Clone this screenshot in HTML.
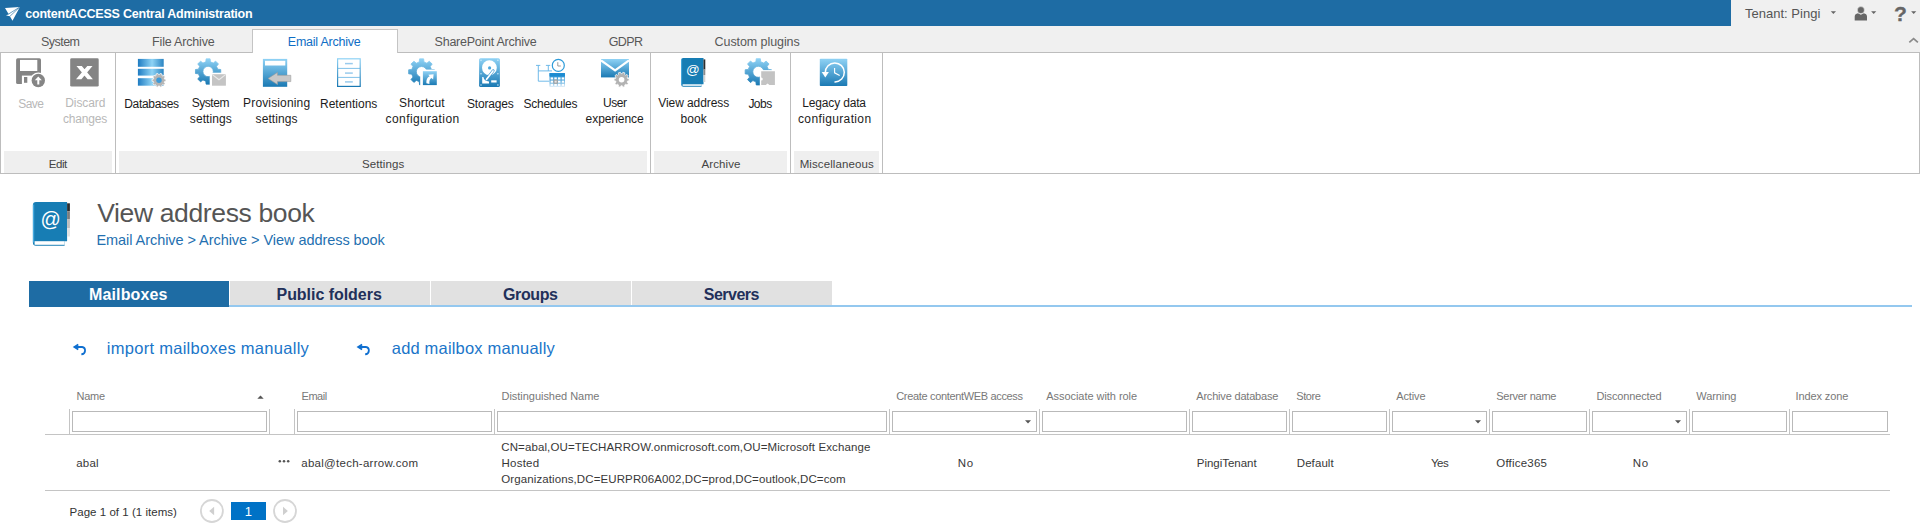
<!DOCTYPE html>
<html lang="en">
<head>
<meta charset="utf-8">
<title>contentACCESS Central Administration</title>
<style>
*{box-sizing:border-box;margin:0;padding:0}
html,body{width:1920px;height:527px;overflow:hidden;background:#fff}
body{font-family:"Liberation Sans",sans-serif;color:#222}
h1{font-weight:normal;font-size:inherit}
.tx{position:absolute;white-space:pre;line-height:1;font-family:"Liberation Sans",sans-serif}
#topbar{position:absolute;left:0;top:0;width:1731px;height:26px;background:#1e6ca4}
#topright{position:absolute;left:1731px;top:0;width:189px;height:26px;background:#f0f0f0}
.help{left:1893.9px;top:2px;font-size:21px;line-height:24px;font-weight:bold;color:#666;-webkit-text-stroke:0.3px #666}
#tabrow{position:absolute;left:0;top:26px;width:1920px;height:27px;background:#f0f0f0;border-bottom:1px solid #bdbdbd}
#rtab-active{position:absolute;left:252px;top:29px;width:146px;height:24px;background:#fff;border:1px solid #c4c4c4;border-bottom:none}
#ribbon{position:absolute;left:0;top:53px;width:1920px;height:121px;background:#fff;border-bottom:1px solid #bdbdbd;border-left:1px solid #bdbdbd;border-right:1px solid #bdbdbd}
.gsep{position:absolute;top:53px;width:1px;height:120px;background:#bdbdbd}
.glabel{position:absolute;top:151px;height:22px;background:#efefef}
#icons{position:absolute;left:0;top:0;width:1920px;height:527px;pointer-events:none}
.stab{position:absolute;top:281px;height:26px;background:#e1e1e1;border-bottom:2px solid #94c8ef}
.stab.on{background:#1e6ca4;border-bottom:none}
#stabline{position:absolute;left:29px;top:305px;width:1883px;height:2px;background:#94c8ef}
.gf{position:absolute;top:411px;height:21px;border:1px solid #b9b9b9;background:#fff}
.gfsep{position:absolute;top:409px;width:1px;height:25px;background:#c4c4c4}
.hline{position:absolute;height:1px;background:#c4c4c4;left:45px;width:1845px}
#pgnum{position:absolute;left:231px;top:502px;width:35px;height:18px;background:#0072c6}
</style>
</head>
<body>
<div id="topbar"></div><div id="topright"></div>
<div class="g" id="apptitle"><span class="tx" style="left:25.25px;top:8px;font-size:12.5px;letter-spacing:-0.216px;color:#fff;font-weight:bold">contentACCESS Central Administration</span></div>
<div class="g" id="tenant"><span class="tx" style="left:1745.00px;top:7px;font-size:13px;letter-spacing:0.010px;color:#555">Tenant: Pingi</span><span class="tx help">?</span></div>
<div id="tabrow"></div><div id="rtab-active"></div>
<div class="g" id="tabs"><span class="tx" style="left:41.00px;top:36px;font-size:12.5px;letter-spacing:-0.532px;color:#585858">System</span><span class="tx" style="left:152.10px;top:36px;font-size:12.5px;letter-spacing:-0.186px;color:#585858">File Archive</span><span class="tx" style="left:287.80px;top:36px;font-size:12.5px;letter-spacing:-0.238px;color:#0f6ec5">Email Archive</span><span class="tx" style="left:434.60px;top:36px;font-size:12.5px;letter-spacing:-0.250px;color:#585858">SharePoint Archive</span><span class="tx" style="left:608.63px;top:36px;font-size:12.5px;letter-spacing:-0.550px;color:#585858">GDPR</span><span class="tx" style="left:714.60px;top:36px;font-size:12.5px;letter-spacing:-0.077px;color:#585858">Custom plugins</span></div>
<div id="ribbon"></div>
<div class="gsep" style="left:115px"></div>
<div class="gsep" style="left:650px"></div>
<div class="gsep" style="left:790px"></div>
<div class="gsep" style="left:882px"></div>
<div class="glabel" style="left:4px;width:108px"></div>
<div class="glabel" style="left:119px;width:528px"></div>
<div class="glabel" style="left:654px;width:133px"></div>
<div class="glabel" style="left:794px;width:85px"></div>
<div class="g" id="glabels"><span class="tx" style="left:48.75px;top:159px;font-size:11.5px;letter-spacing:-0.424px;color:#444">Edit</span><span class="tx" style="left:362.00px;top:159px;font-size:11.5px;letter-spacing:0.085px;color:#444">Settings</span><span class="tx" style="left:701.50px;top:159px;font-size:11.5px;letter-spacing:0.092px;color:#444">Archive</span><span class="tx" style="left:799.70px;top:159px;font-size:11.5px;letter-spacing:0.098px;color:#444">Miscellaneous</span></div>
<div class="g rbtn"><span class="tx" style="left:18.24px;top:98px;font-size:12px;letter-spacing:-0.550px;color:#b8b8b8">Save</span></div>
<div class="g rbtn"><span class="tx" style="left:65.30px;top:97px;font-size:12px;letter-spacing:-0.100px;color:#b8b8b8">Discard</span> <span class="tx" style="left:63.00px;top:113px;font-size:12px;letter-spacing:-0.178px;color:#b8b8b8">changes</span></div>
<div class="g rbtn"><span class="tx" style="left:124.20px;top:98px;font-size:12px;letter-spacing:-0.309px;color:#1c1c1c">Databases</span></div>
<div class="g rbtn"><span class="tx" style="left:191.80px;top:97px;font-size:12px;letter-spacing:-0.482px;color:#1c1c1c">System</span> <span class="tx" style="left:189.80px;top:113px;font-size:12px;letter-spacing:0.092px;color:#1c1c1c">settings</span></div>
<div class="g rbtn"><span class="tx" style="left:243.10px;top:97px;font-size:12px;letter-spacing:0.146px;color:#1c1c1c">Provisioning</span> <span class="tx" style="left:255.60px;top:113px;font-size:12px;letter-spacing:0.078px;color:#1c1c1c">settings</span></div>
<div class="g rbtn"><span class="tx" style="left:320.00px;top:98px;font-size:12px;letter-spacing:-0.008px;color:#1c1c1c">Retentions</span></div>
<div class="g rbtn"><span class="tx" style="left:399.00px;top:97px;font-size:12px;letter-spacing:0.135px;color:#1c1c1c">Shortcut</span> <span class="tx" style="left:385.60px;top:113px;font-size:12px;letter-spacing:0.405px;color:#1c1c1c">configuration</span></div>
<div class="g rbtn"><span class="tx" style="left:466.90px;top:98px;font-size:12px;letter-spacing:-0.168px;color:#1c1c1c">Storages</span></div>
<div class="g rbtn"><span class="tx" style="left:523.50px;top:98px;font-size:12px;letter-spacing:-0.255px;color:#1c1c1c">Schedules</span></div>
<div class="g rbtn"><span class="tx" style="left:603.10px;top:97px;font-size:12px;letter-spacing:-0.513px;color:#1c1c1c">User</span> <span class="tx" style="left:585.60px;top:113px;font-size:12px;letter-spacing:-0.070px;color:#1c1c1c">experience</span></div>
<div class="g rbtn"><span class="tx" style="left:658.30px;top:97px;font-size:12px;letter-spacing:-0.083px;color:#1c1c1c">View address</span> <span class="tx" style="left:680.40px;top:113px;font-size:12px;letter-spacing:0.093px;color:#1c1c1c">book</span></div>
<div class="g rbtn"><span class="tx" style="left:748.40px;top:98px;font-size:12px;letter-spacing:-0.516px;color:#1c1c1c">Jobs</span></div>
<div class="g rbtn"><span class="tx" style="left:802.30px;top:97px;font-size:12px;letter-spacing:-0.171px;color:#1c1c1c">Legacy data</span> <span class="tx" style="left:798.00px;top:113px;font-size:12px;letter-spacing:0.363px;color:#1c1c1c">configuration</span></div>
<h1 class="g"><span class="tx" style="left:97.20px;top:200px;font-size:26.5px;letter-spacing:-0.361px;color:#555">View address book</span></h1>
<div class="g" id="crumb"><span class="tx" style="left:96.40px;top:233px;font-size:14.5px;letter-spacing:-0.053px;color:#2470b0">Email Archive &gt; Archive &gt; View address book</span></div>
<div id="stabline"></div>
<div class="stab on" style="left:29px;width:199.75px"></div>
<div class="g"><span class="tx" style="left:89.00px;top:287px;font-size:16px;letter-spacing:0.130px;color:#fff;font-weight:bold">Mailboxes</span></div>
<div class="stab" style="left:230.25px;width:199.5px"></div>
<div class="g"><span class="tx" style="left:276.50px;top:287px;font-size:16px;letter-spacing:-0.038px;color:#22305a;font-weight:bold">Public folders</span></div>
<div class="stab" style="left:431.25px;width:199.5px"></div>
<div class="g"><span class="tx" style="left:503.00px;top:287px;font-size:16px;letter-spacing:-0.398px;color:#22305a;font-weight:bold">Groups</span></div>
<div class="stab" style="left:632.25px;width:199.5px"></div>
<div class="g"><span class="tx" style="left:703.75px;top:287px;font-size:16px;letter-spacing:-0.512px;color:#22305a;font-weight:bold">Servers</span></div>
<div class="g alink"><span class="tx" style="left:106.80px;top:340px;font-size:16.5px;letter-spacing:0.280px;color:#1a75c9">import mailboxes manually</span></div>
<div class="g alink"><span class="tx" style="left:391.80px;top:340px;font-size:16.5px;letter-spacing:0.177px;color:#1a75c9">add mailbox manually</span></div>
<div class="gfsep" style="left:69px"></div>
<div class="gfsep" style="left:269px"></div>
<div class="gfsep" style="left:294px"></div>
<div class="gfsep" style="left:494px"></div>
<div class="gfsep" style="left:889px"></div>
<div class="gfsep" style="left:1039px"></div>
<div class="gfsep" style="left:1189px"></div>
<div class="gfsep" style="left:1289px"></div>
<div class="gfsep" style="left:1389px"></div>
<div class="gfsep" style="left:1489px"></div>
<div class="gfsep" style="left:1589px"></div>
<div class="gfsep" style="left:1689px"></div>
<div class="gfsep" style="left:1789px"></div>
<div class="gf" style="left:72px;width:195px"></div>
<div class="gf" style="left:297px;width:195px"></div>
<div class="gf" style="left:497px;width:390px"></div>
<div class="gf" style="left:892px;width:145px"></div>
<div class="gf" style="left:1042px;width:145px"></div>
<div class="gf" style="left:1192px;width:95px"></div>
<div class="gf" style="left:1292px;width:95px"></div>
<div class="gf" style="left:1392px;width:95px"></div>
<div class="gf" style="left:1492px;width:95px"></div>
<div class="gf" style="left:1592px;width:95px"></div>
<div class="gf" style="left:1692px;width:95px"></div>
<div class="gf" style="left:1792px;width:96px"></div>
<div class="g" id="ghead"><span class="tx" style="left:76.60px;top:391px;font-size:11px;letter-spacing:-0.275px;color:#787878">Name</span><span class="tx" style="left:301.50px;top:391px;font-size:11px;letter-spacing:-0.453px;color:#787878">Email</span><span class="tx" style="left:501.50px;top:391px;font-size:11px;letter-spacing:-0.033px;color:#787878">Distinguished Name</span><span class="tx" style="left:896.25px;top:391px;font-size:11px;letter-spacing:-0.337px;color:#787878">Create contentWEB access</span><span class="tx" style="left:1046.25px;top:391px;font-size:11px;letter-spacing:-0.047px;color:#787878">Associate with role</span><span class="tx" style="left:1196.25px;top:391px;font-size:11px;letter-spacing:-0.192px;color:#787878">Archive database</span><span class="tx" style="left:1296.25px;top:391px;font-size:11px;letter-spacing:-0.418px;color:#787878">Store</span><span class="tx" style="left:1396.25px;top:391px;font-size:11px;letter-spacing:-0.117px;color:#787878">Active</span><span class="tx" style="left:1496.25px;top:391px;font-size:11px;letter-spacing:-0.285px;color:#787878">Server name</span><span class="tx" style="left:1596.50px;top:391px;font-size:11px;letter-spacing:-0.139px;color:#787878">Disconnected</span><span class="tx" style="left:1696.25px;top:391px;font-size:11px;letter-spacing:-0.072px;color:#787878">Warning</span><span class="tx" style="left:1795.50px;top:391px;font-size:11px;letter-spacing:-0.106px;color:#787878">Index zone</span></div>
<div class="hline" style="top:434px"></div>
<div class="hline" style="top:490px"></div>
<div class="g" id="grow"><span class="tx" style="left:76.25px;top:458px;font-size:11.5px;letter-spacing:0.188px;color:#383838">abal</span><span class="tx" style="left:301.25px;top:458px;font-size:11.5px;letter-spacing:0.267px;color:#383838">abal@tech-arrow.com</span><span class="g"><span class="tx" style="left:501.25px;top:442px;font-size:11.5px;letter-spacing:0.113px;color:#383838">CN=abal,OU=TECHARROW.onmicrosoft.com,OU=Microsoft Exchange</span> <span class="tx" style="left:501.50px;top:458px;font-size:11.5px;letter-spacing:0.242px;color:#383838">Hosted</span> <span class="tx" style="left:501.25px;top:474px;font-size:11.5px;letter-spacing:0.105px;color:#383838">Organizations,DC=EURPR06A002,DC=prod,DC=outlook,DC=com</span></span><span class="tx" style="left:957.80px;top:458px;font-size:11.5px;letter-spacing:0.600px;color:#383838">No</span><span class="tx" style="left:1196.75px;top:458px;font-size:11.5px;letter-spacing:-0.015px;color:#383838">PingiTenant</span><span class="tx" style="left:1296.75px;top:458px;font-size:11.5px;letter-spacing:0.085px;color:#383838">Default</span><span class="tx" style="left:1431.04px;top:458px;font-size:11.5px;letter-spacing:-0.550px;color:#383838">Yes</span><span class="tx" style="left:1496.25px;top:458px;font-size:11.5px;letter-spacing:0.204px;color:#383838">Office365</span><span class="tx" style="left:1632.80px;top:458px;font-size:11.5px;letter-spacing:0.600px;color:#383838">No</span></div>
<div class="g" id="pager"><span class="tx" style="left:69.50px;top:507px;font-size:11.5px;letter-spacing:0.034px;color:#333">Page 1 of 1 (1 items)</span></div>
<div id="pgnum"></div>
<div class="g"><span class="tx" style="left:244.80px;top:505px;font-size:13px;letter-spacing:0.000px;color:#fff">1</span></div>
<svg id="icons" viewBox="0 0 1920 527" width="1920" height="527">
<defs>
<linearGradient id="gv" x1="0" y1="0" x2="0" y2="1"><stop offset="0" stop-color="#8fd2f5"/><stop offset="1" stop-color="#1a79b3"/></linearGradient>
<linearGradient id="gh" x1="0" y1="0" x2="1" y2="0"><stop offset="0" stop-color="#1f7cc2"/><stop offset="0.55" stop-color="#8ed3f5"/><stop offset="1" stop-color="#2a84c2"/></linearGradient>
<linearGradient id="gcal" x1="0" y1="0" x2="0" y2="1"><stop offset="0" stop-color="#2f95d6"/><stop offset="0.6" stop-color="#58abde"/><stop offset="1" stop-color="#d6e9f7"/></linearGradient>
</defs>
<path d="M5 8 L19.9 6.9 L12.5 20.7 L9.9 16.2 L6.1 15.5 L8.6 14.1 Z" fill="#fff"/>
<path d="M19.7 7.1 L7.2 14.9 M19.7 7.1 L10.1 16.1" stroke="#1e6ca4" stroke-width="0.65" fill="none"/>
<path d="M1830.8000000000002 11.2 h5.2 l-2.6 2.8 z" fill="#666"/>
<path d="M1871.1000000000001 11.2 h5.2 l-2.6 2.8 z" fill="#666"/>
<path d="M1911.1000000000001 11.2 h5.2 l-2.6 2.8 z" fill="#666"/>
<path d="M1854.7 20.4 V16.4 Q1854.9 13.9 1858 13.3 L1860.9 14.8 L1863.8 13.3 Q1866.8 13.9 1867 16.4 V20.4 Z" fill="#666"/><circle cx="1860.9" cy="10.1" r="3.5" fill="#666" stroke="#f0f0f0" stroke-width="0.5"/>
<path d="M1909.3 42.4 L1913.6 38.6 L1917.9 42.4" stroke="#8a8a8a" stroke-width="1.7" fill="none"/>
<rect x="16.1" y="58.3" width="24.9" height="25.7" rx="1.6" fill="#858585"/>
<rect x="20" y="59.9" width="17.3" height="11.1" fill="#fff"/>
<rect x="21.9" y="75.6" width="12" height="8.4" fill="#fff"/><rect x="24" y="77" width="3.3" height="5.8" fill="#858585"/>
<circle cx="38.3" cy="80.5" r="8.1" fill="#fff"/><circle cx="38.3" cy="80.5" r="6.7" fill="#858585"/>
<path d="M38.3 76.4 L41.8 80.2 L39.3 80.2 L39.3 84.6 L37.3 84.6 L37.3 80.2 L34.8 80.2 Z" fill="#fff"/>
<rect x="70.2" y="58.3" width="28.5" height="28.3" rx="1.4" fill="#848484"/>
<path d="M76.5 65.9 H81.8 L92.9 79.2 H87.6 Z M87.3 65.9 H92.5 L81.4 79.2 H76 Z" fill="#fff"/>
<rect x="137.9" y="58.9" width="25.8" height="7.9" fill="url(#gh)"/>
<rect x="137.9" y="68.8" width="25.8" height="6.8" fill="url(#gh)"/>
<rect x="137.9" y="78.2" width="25.8" height="7.5" fill="url(#gh)"/>
<path d="M164.58 79.13 L165.93 79.29 L165.93 81.31 L164.58 81.47 L164.20 82.63 L165.20 83.56 L164.01 85.19 L162.82 84.53 L161.84 85.24 L162.10 86.58 L160.18 87.20 L159.61 85.97 L158.39 85.97 L157.82 87.20 L155.90 86.58 L156.16 85.24 L155.18 84.53 L153.99 85.19 L152.80 83.56 L153.80 82.63 L153.42 81.47 L152.07 81.31 L152.07 79.29 L153.42 79.13 L153.80 77.97 L152.80 77.04 L153.99 75.41 L155.18 76.07 L156.16 75.36 L155.90 74.02 L157.82 73.40 L158.39 74.63 L159.61 74.63 L160.18 73.40 L162.10 74.02 L161.84 75.36 L162.82 76.07 L164.01 75.41 L165.20 77.04 L164.20 77.97 Z" fill="#b4b4b4" stroke="#fff" stroke-width="0.7" fill-rule="evenodd"/>
<circle cx="159" cy="80.3" r="2.7" fill="#3c9ad8"/>
<path d="M205.79 61.87 L206.10 58.86 L210.10 58.86 L210.41 61.87 L213.27 63.06 L215.62 61.14 L218.46 63.98 L216.54 66.33 L217.73 69.19 L220.74 69.50 L220.74 73.50 L217.73 73.81 L216.54 76.67 L218.46 79.02 L215.62 81.86 L213.27 79.94 L210.41 81.13 L210.10 84.14 L206.10 84.14 L205.79 81.13 L202.93 79.94 L200.58 81.86 L197.74 79.02 L199.66 76.67 L198.47 73.81 L195.46 73.50 L195.46 69.50 L198.47 69.19 L199.66 66.33 L197.74 63.98 L200.58 61.14 L202.93 63.06 Z M213.30 71.50 A5.20 5.20 0 1 0 202.90 71.50 A5.20 5.20 0 1 0 213.30 71.50 Z" fill="url(#gv)" fill-rule="evenodd" stroke="url(#gv)" stroke-width="0.8" stroke-linejoin="round"/>
<rect x="209.7" y="72.7" width="18" height="15" fill="#fff"/>
<rect x="212" y="74.2" width="13.9" height="11.5" fill="#c4c4c4"/><path d="M212 74.4 L219 79.8 L225.9 74.4" stroke="#e9e9e9" stroke-width="1.1" fill="none"/>
<rect x="262.9" y="58.9" width="24.3" height="27.9" fill="url(#gv)"/><rect x="265" y="60.8" width="20.3" height="4.7" fill="#fff"/>
<path d="M268.1 78.4 L277.5 72.4 L277.5 75.3 L290.8 75.3 L290.8 81.6 L277.5 81.6 L277.5 84.6 Z" fill="#c8c8c8" stroke="#9c9c9c" stroke-width="0.6"/>
<rect x="337.6" y="58.8" width="22.6" height="27.6" fill="#fff" stroke="url(#gv)" stroke-width="1.2"/>
<path d="M337.6 68.4 H360.2 M337.6 77.4 H360.2" stroke="#62b1e2" stroke-width="0.8"/>
<path d="M345 63.6 H352.8" stroke="#9acbed" stroke-width="1.5"/>
<path d="M345 73.1 H352.8" stroke="#9acbed" stroke-width="1.5"/>
<path d="M345 81.9 H352.8" stroke="#9acbed" stroke-width="1.5"/>
<path d="M419.24 61.98 L419.55 58.86 L423.65 58.86 L423.96 61.98 L426.88 63.19 L429.30 61.20 L432.20 64.10 L430.21 66.52 L431.42 69.44 L434.54 69.75 L434.54 73.85 L431.42 74.16 L430.21 77.08 L432.20 79.50 L429.30 82.40 L426.88 80.41 L423.96 81.62 L423.65 84.74 L419.55 84.74 L419.24 81.62 L416.32 80.41 L413.90 82.40 L411.00 79.50 L412.99 77.08 L411.78 74.16 L408.66 73.85 L408.66 69.75 L411.78 69.44 L412.99 66.52 L411.00 64.10 L413.90 61.20 L416.32 63.19 Z M426.90 71.80 A5.30 5.30 0 1 0 416.30 71.80 A5.30 5.30 0 1 0 426.90 71.80 Z" fill="url(#gv)" fill-rule="evenodd" stroke="url(#gv)" stroke-width="0.8" stroke-linejoin="round"/>
<rect x="420.2" y="69.6" width="18" height="18" fill="#fff"/>
<rect x="422.9" y="71.2" width="13.9" height="13.9" fill="url(#gv)"/>
<path d="M426.4 83.3 Q426 77.8 429.7 76.2 L428.2 74.7 L433.6 74.2 L433.1 79.6 L431.6 78.1 Q429 79.4 429.4 83.9 Z" fill="#fff"/>
<rect x="479.1" y="58.2" width="20.8" height="28.8" rx="1.6" fill="url(#gv)"/>
<circle cx="489.4" cy="67.7" r="7.4" fill="#fff"/><circle cx="489.6" cy="67.9" r="1.6" fill="#4aa6dc"/>
<path d="M493.2 70.6 L486.4 79.6" stroke="#3c97cf" stroke-width="2.7" stroke-linecap="round"/><path d="M493 70.9 L486.6 79.3" stroke="#fff" stroke-width="1.7" stroke-linecap="round"/>
<path d="M482.2 77 H483.4 Q484 81 489 81.6 V83.6 H482.2 Z" fill="#fff"/><rect x="491.2" y="80.3" width="5.4" height="2.2" fill="#fff"/>
<circle cx="481" cy="60.3" r="0.7" fill="#d8eefb"/>
<circle cx="497.9" cy="60.3" r="0.7" fill="#d8eefb"/>
<circle cx="481" cy="73.8" r="0.7" fill="#d8eefb"/>
<circle cx="497.9" cy="73.8" r="0.7" fill="#d8eefb"/>
<circle cx="481" cy="85" r="0.7" fill="#d8eefb"/>
<circle cx="497.9" cy="85" r="0.7" fill="#d8eefb"/>
<circle cx="558.3" cy="65.4" r="6" fill="#fff" stroke="#2c9bd9" stroke-width="1.2"/><path d="M557.8 62.2 V66 H560.8" stroke="#9a9a9a" stroke-width="1" fill="none"/>
<path d="M536 65.4 H540.3 M545.9 65.4 H550.2 M538.3 65.4 V81.2 H549.2 M548.3 65.4 V70.9 M538.3 70.9 H552" stroke="#62b3e6" stroke-width="0.9" fill="none"/>
<rect x="549.5" y="73.1" width="15.4" height="13.7" fill="url(#gcal)"/><rect x="549.5" y="73.1" width="15.4" height="3.4" fill="#1b8bd1"/>
<rect x="550.6" y="77.4" width="2.5" height="2.1" fill="#fff" opacity="1"/>
<rect x="554.3" y="77.4" width="2.5" height="2.1" fill="#fff" opacity="1"/>
<rect x="558.0" y="77.4" width="2.5" height="2.1" fill="#fff" opacity="1"/>
<rect x="561.7" y="77.4" width="2.5" height="2.1" fill="#fff" opacity="1"/>
<rect x="550.6" y="80.6" width="2.5" height="2.1" fill="#fff" opacity="1"/>
<rect x="554.3" y="80.6" width="2.5" height="2.1" fill="#fff" opacity="1"/>
<rect x="558.0" y="80.6" width="2.5" height="2.1" fill="#fff" opacity="1"/>
<rect x="561.7" y="80.6" width="2.5" height="2.1" fill="#fff" opacity="1"/>
<rect x="550.6" y="83.8" width="2.5" height="2.1" fill="#fff" opacity="1"/>
<rect x="554.3" y="83.8" width="2.5" height="2.1" fill="#fff" opacity="1"/>
<rect x="558.0" y="83.8" width="2.5" height="2.1" fill="#fff" opacity="1"/>
<rect x="561.7" y="83.8" width="2.5" height="2.1" fill="#fff" opacity="1"/>
<rect x="553.4" y="79.5" width="4.5" height="4.3" fill="#a3a3a3"/><rect x="554.6" y="80.7" width="2.1" height="1.9" fill="#e6e6e6"/>
<rect x="601" y="59" width="28" height="18.4" fill="url(#gv)"/><path d="M601 60.4 L615.1 70.4 L629 60.4" stroke="#fff" stroke-width="2.2" fill="none"/>
<path d="M627.57 78.44 L629.12 78.61 L629.12 80.79 L627.57 80.96 L627.17 82.19 L628.33 83.24 L627.04 85.01 L625.69 84.22 L624.64 84.99 L624.96 86.51 L622.88 87.19 L622.25 85.77 L620.95 85.77 L620.32 87.19 L618.24 86.51 L618.56 84.99 L617.51 84.22 L616.16 85.01 L614.87 83.24 L616.03 82.19 L615.63 80.96 L614.08 80.79 L614.08 78.61 L615.63 78.44 L616.03 77.21 L614.87 76.16 L616.16 74.39 L617.51 75.18 L618.56 74.41 L618.24 72.89 L620.32 72.21 L620.95 73.63 L622.25 73.63 L622.88 72.21 L624.96 72.89 L624.64 74.41 L625.69 75.18 L627.04 74.39 L628.33 76.16 L627.17 77.21 Z" fill="#b2b2b2" stroke="#fff" stroke-width="0.7" fill-rule="evenodd"/>
<circle cx="621.6" cy="79.7" r="2.8" fill="#fff"/>
<path d="M683.2 58 H703.5 V84.3 H701.5 V86.8 H683.4 Q681.2 86.8 681.2 84.4 V60 Q681.2 58 683.2 58 Z" fill="#177db4"/>
<rect x="681.2" y="59.5" width="0.9" height="25" fill="#45a9de"/>
<rect x="682.6" y="84.3" width="18.9" height="1.5" fill="#fff"/>
<rect x="703.5" y="59.4" width="1.8" height="10.1" fill="#2d2d2d"/><rect x="703.5" y="69.5" width="1.8" height="5.5" fill="#8b8b8b"/><rect x="703.5" y="75" width="1.8" height="7" fill="#d4d4d4"/>
<text x="692.8" y="73.8" font-family="Liberation Sans, sans-serif" font-size="13.5" fill="#fff" text-anchor="middle">@</text>
<path d="M755.90 61.78 L756.22 58.66 L760.38 58.66 L760.70 61.78 L763.68 63.02 L766.12 61.04 L769.06 63.98 L767.08 66.42 L768.32 69.40 L771.44 69.72 L771.44 73.88 L768.32 74.20 L767.08 77.18 L769.06 79.62 L766.12 82.56 L763.68 80.58 L760.70 81.82 L760.38 84.94 L756.22 84.94 L755.90 81.82 L752.92 80.58 L750.48 82.56 L747.54 79.62 L749.52 77.18 L748.28 74.20 L745.16 73.88 L745.16 69.72 L748.28 69.40 L749.52 66.42 L747.54 63.98 L750.48 61.04 L752.92 63.02 Z M763.80 71.80 A5.50 5.50 0 1 0 752.80 71.80 A5.50 5.50 0 1 0 763.80 71.80 Z" fill="url(#gv)" fill-rule="evenodd" stroke="url(#gv)" stroke-width="0.8" stroke-linejoin="round"/>
<rect x="759.8" y="70.1" width="17" height="17" fill="#fff"/>
<path d="M761.2 71.3 H774.9 V85 H769.4 L767.6 83.4 L765.8 85 H761.2 V80.6 A1.6 1.6 0 0 0 761.2 77.4 Z" fill="#c3c3c3"/>
<rect x="819.8" y="58.7" width="27.5" height="27.4" rx="0.8" fill="url(#gv)"/>
<path d="M825.3 72.4 A9.5 9.5 0 1 1 835 81.9" stroke="#fff" stroke-width="1.5" fill="none" stroke-linecap="round"/>
<path d="M821.7 72 H828.9 L825.3 77.4 Z" fill="#fff"/><path d="M834.6 68 V72.8 L839.7 75.6" stroke="#fff" stroke-width="1.1" fill="none"/>
<path d="M36 202 H67.1 V241.2 H64.6 V245.8 H36 Q32.9 245.8 32.9 242.6 V205 Q32.9 202 36 202 Z" fill="#177db4"/>
<rect x="32.9" y="204.5" width="1.3" height="38" fill="#45a9de"/>
<rect x="34.6" y="241.2" width="30" height="3.6" fill="#fff"/>
<rect x="67.1" y="203.3" width="2.8" height="8" fill="#2d2d2d"/><rect x="67.1" y="211.3" width="2.8" height="7.8" fill="#7d7d7d"/><rect x="67.1" y="219.1" width="2.8" height="9" fill="#bdbdbd"/><rect x="67.1" y="228.1" width="2.8" height="8.4" fill="#e2e2e2"/>
<text x="50.7" y="225.6" font-family="Liberation Sans, sans-serif" font-size="20" fill="#fff" text-anchor="middle">@</text>
<path d="M74.50 347 H82.00 A3.65 3.65 0 0 1 81.37 354.25" stroke="#0f6fd0" stroke-width="1.8" fill="none"/><path d="M78.30 344.50 L74.40 347 L78.30 349.50" stroke="#0f6fd0" stroke-width="1.8" fill="none" stroke-linejoin="miter"/>
<path d="M358.30 347 H365.80 A3.65 3.65 0 0 1 365.17 354.25" stroke="#0f6fd0" stroke-width="1.8" fill="none"/><path d="M362.10 344.50 L358.20 347 L362.10 349.50" stroke="#0f6fd0" stroke-width="1.8" fill="none" stroke-linejoin="miter"/>
<path d="M257.3 398.8 L260.5 395.4 L263.7 398.8 Z" fill="#555"/>
<path d="M1025 420.2 h6 l-3 3.2 z" fill="#555"/>
<path d="M1475 420.2 h6 l-3 3.2 z" fill="#555"/>
<path d="M1675 420.2 h6 l-3 3.2 z" fill="#555"/>
<circle cx="279.8" cy="461.3" r="1.25" fill="#555"/>
<circle cx="284" cy="461.3" r="1.25" fill="#555"/>
<circle cx="288.2" cy="461.3" r="1.25" fill="#555"/>
<circle cx="211.9" cy="511" r="11" fill="#fff" stroke="#d6d6d6" stroke-width="1.8"/><path d="M214.1 506.8 V515.2 L209.2 511 Z" fill="#cfcfcf"/>
<circle cx="285" cy="511" r="11" fill="#fff" stroke="#d6d6d6" stroke-width="1.8"/><path d="M283 506.8 V515.2 L287.9 511 Z" fill="#cfcfcf"/>
</svg>
</body>
</html>
